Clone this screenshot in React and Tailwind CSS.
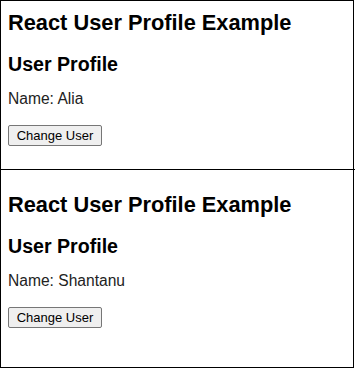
// Two stacked "User Profile" cards, each with its own name
import { useState } from 'react'

const users = ['Alia', 'Shantanu']

const UserProfile = ({ initial }) => {
  const [name, setName] = useState(initial)

  return (
    <div>
      <h2 className="text-[19.6px] leading-[24px] font-bold text-black">User Profile</h2>
      <p className="mt-[14px] text-[15.6px] leading-[18px] text-[#222]">Name: {name}</p>
      <button
        onClick={() => setName(name === 'Alia' ? 'Shantanu' : 'Alia')}
        className="mt-[17px] h-[21px] w-[94px] bg-[#efefef] border border-[#767676]
                   rounded-[2px] text-[13px] leading-none text-black"
      >
        Change User
      </button>
    </div>
  )
}

const Card = ({ initial, top, bottom }) => (
  <div className={`px-[7px] ${top} ${bottom}`}>
    <h1 className="text-[21.8px] leading-[26px] font-bold text-black">
      React User Profile Example
    </h1>
    <div className="mt-[16px]">
      <UserProfile initial={initial} />
    </div>
  </div>
)

export default function App() {
  return (
    <div className="font-['Liberation_Sans',Arial,sans-serif] bg-white">
      <div className="w-[354px] h-[368px] border border-black flex flex-col">
        <Card initial={users[0]} top="pt-[9px]" bottom="h-[168px]" />
        <div className="w-[355px] h-px bg-black shrink-0" />
        <Card initial={users[1]} top="pt-[22px]" bottom="flex-1" />
      </div>
    </div>
  )
}
